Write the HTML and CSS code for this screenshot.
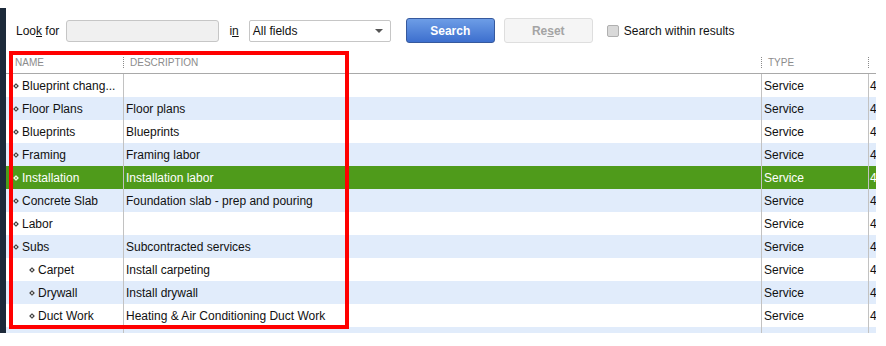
FILE: index.html
```html
<!DOCTYPE html>
<html lang="en">

<head>
    <meta charset="UTF-8">
    <title>Item List</title>
    <link rel="stylesheet" href="styles.css">
</head>

<body>

    <div class="frame">
        <div class="side"></div>

        <div class="main">
            <div class="toolbar">
                <span class="label">Loo<u>k</u> for</span>
                <input type="text" class="find">
                <span class="label in">i<u>n</u></span>
                <div class="select">
                    <span>All fields</span>
                    <span class="caret"></span>
                </div>
                <button class="btn primary">Search</button>
                <button class="btn disabled">Re<u>s</u>et</button>
                <span class="check"></span>
                <span class="label check-text">Search within results</span>
            </div>

            <div class="grid">
                <div class="head">
                    <div class="hcell c-name">NAME</div>
                    <div class="hcell c-desc"><span class="sep"></span>DESCRIPTION</div>
                    <div class="hcell c-type"><span class="sep"></span>TYPE</div>
                    <div class="hcell c-more"><span class="sep"></span></div>
                </div>

                <div class="rows">
                    <div class="row">
                        <div class="cell c-name"><span class="dot"></span>Blueprint chang...</div>
                        <div class="cell c-desc"></div>
                        <div class="cell c-type">Service</div>
                        <div class="cell c-more">4</div>
                    </div>
                    <div class="row alt">
                        <div class="cell c-name"><span class="dot"></span>Floor Plans</div>
                        <div class="cell c-desc">Floor plans</div>
                        <div class="cell c-type">Service</div>
                        <div class="cell c-more">4</div>
                    </div>
                    <div class="row">
                        <div class="cell c-name"><span class="dot"></span>Blueprints</div>
                        <div class="cell c-desc">Blueprints</div>
                        <div class="cell c-type">Service</div>
                        <div class="cell c-more">4</div>
                    </div>
                    <div class="row alt">
                        <div class="cell c-name"><span class="dot"></span>Framing</div>
                        <div class="cell c-desc">Framing labor</div>
                        <div class="cell c-type">Service</div>
                        <div class="cell c-more">4</div>
                    </div>
                    <div class="row selected">
                        <div class="cell c-name"><span class="dot"></span>Installation</div>
                        <div class="cell c-desc">Installation labor</div>
                        <div class="cell c-type">Service</div>
                        <div class="cell c-more">4</div>
                    </div>
                    <div class="row alt">
                        <div class="cell c-name"><span class="dot"></span>Concrete Slab</div>
                        <div class="cell c-desc">Foundation slab - prep and pouring</div>
                        <div class="cell c-type">Service</div>
                        <div class="cell c-more">4</div>
                    </div>
                    <div class="row">
                        <div class="cell c-name"><span class="dot"></span>Labor</div>
                        <div class="cell c-desc"></div>
                        <div class="cell c-type">Service</div>
                        <div class="cell c-more">4</div>
                    </div>
                    <div class="row alt">
                        <div class="cell c-name"><span class="dot"></span>Subs</div>
                        <div class="cell c-desc">Subcontracted services</div>
                        <div class="cell c-type">Service</div>
                        <div class="cell c-more">4</div>
                    </div>
                    <div class="row">
                        <div class="cell c-name child"><span class="dot"></span>Carpet</div>
                        <div class="cell c-desc">Install carpeting</div>
                        <div class="cell c-type">Service</div>
                        <div class="cell c-more">4</div>
                    </div>
                    <div class="row alt">
                        <div class="cell c-name child"><span class="dot"></span>Drywall</div>
                        <div class="cell c-desc">Install drywall</div>
                        <div class="cell c-type">Service</div>
                        <div class="cell c-more">4</div>
                    </div>
                    <div class="row">
                        <div class="cell c-name child"><span class="dot"></span>Duct Work</div>
                        <div class="cell c-desc">Heating &amp; Air Conditioning Duct Work</div>
                        <div class="cell c-type">Service</div>
                        <div class="cell c-more">4</div>
                    </div>
                    <div class="row alt">
                        <div class="cell c-name"></div>
                        <div class="cell c-desc"></div>
                        <div class="cell c-type"></div>
                        <div class="cell c-more"></div>
                    </div>
                </div>
            </div>
        </div>

        <!-- annotation box drawn over the list -->
        <div class="highlight"></div>
    </div>

</body>

</html>
```

FILE: styles.css
```css
body {
    margin: 0;
    background: #fff;
    font-family: "Liberation Sans", Arial, sans-serif;
    font-size: 12px;
    color: #111;
}

.frame {
    position: relative;
    display: flex;
    width: 886px;
    height: 346px;
}

.side {
    width: 6px;
    height: 325px;
    margin-top: 8px;
    background-color: #1d2a3a;
}

.main {
    width: 870px;
    display: flex;
    flex-direction: column;
}

/* search bar */
.toolbar {
    display: flex;
    align-items: center;
    height: 41px;
    padding-top: 10px;
    padding-left: 10px;
}

.label {
    color: #111;
}

.find {
    width: 153px;
    height: 22px;
    box-sizing: border-box;
    margin: 0 0 0 7px;
    border: 1px solid #c6c6c6;
    border-radius: 3px;
    background-color: #f0f0f0;
}

.in {
    margin-left: 10px;
}

.select {
    display: flex;
    align-items: center;
    justify-content: space-between;
    width: 142px;
    height: 22px;
    box-sizing: border-box;
    margin-left: 10px;
    padding: 0 7px 0 3px;
    border: 1px solid #c6c6c6;
    border-radius: 2px;
    background-color: #fff;
}

.caret {
    width: 0;
    height: 0;
    border-left: 4px solid transparent;
    border-right: 4px solid transparent;
    border-top: 4px solid #555;
}

.btn {
    width: 89px;
    height: 25px;
    box-sizing: border-box;
    border-radius: 3px;
    font-family: "Liberation Sans", Arial, sans-serif;
    font-size: 12px;
    font-weight: bold;
    padding: 0;
}

.btn.primary {
    margin-left: 15px;
    color: #fff;
    border: 1px solid #36599d;
    background: linear-gradient(#6d9de6, #3d6fce);
}

.btn.disabled {
    margin-left: 9px;
    color: #a4a4a4;
    border: 1px solid #dedede;
    background-color: #f5f5f5;
}

.check {
    width: 12px;
    height: 12px;
    box-sizing: border-box;
    margin-left: 14px;
    border: 1px solid #b0b0b0;
    border-radius: 2px;
    background-color: #d9d9d9;
}

.check-text {
    margin-left: 5px;
}

/* list */
.grid {
    display: flex;
    flex-direction: column;
}

.head,
.row {
    display: grid;
    grid-template-columns: 118px 638px 107px 8px;
}

.head {
    height: 22px;
    border-bottom: 1px solid #a9a9a9;
}

.hcell {
    display: flex;
    align-items: center;
    padding-top: 1px;
    box-sizing: border-box;
    font-size: 10px;
    color: #8c8c8c;
}

.hcell.c-name {
    padding-left: 9px;
}

.sep {
    width: 0;
    height: 11px;
    margin-left: -1px;
    margin-right: 6px;
    border-left: 1px dotted #8a8a8a;
}

.rows {
    height: 259px;
    overflow: hidden;
}

.row {
    height: 23px;
}

.row.alt {
    background-color: #e1ecfb;
}

.row.selected {
    background-color: #4f9b1b;
    color: #fff;
}

.cell {
    display: flex;
    align-items: center;
    box-sizing: border-box;
    padding-top: 1px;
    padding-left: 2px;
    white-space: nowrap;
    overflow: hidden;
    border-right: 1px solid #c2c2c2;
}

.cell.c-name {
    padding-left: 8px;
}

.cell.c-name.child {
    padding-left: 24px;
}

.cell.c-more {
    border-right: none;
    padding-left: 1px;
}

.dot {
    width: 2px;
    height: 2px;
    margin-right: 4px;
    border: 1px solid #333;
    background-color: #ddd;
    transform: rotate(45deg);
}

.row.selected .dot {
    border-color: #fff;
    background-color: #8cc060;
}

.highlight {
    position: absolute;
    left: 9px;
    top: 51px;
    width: 340px;
    height: 278px;
    box-sizing: border-box;
    border: 4px solid #ff0000;
}
```
